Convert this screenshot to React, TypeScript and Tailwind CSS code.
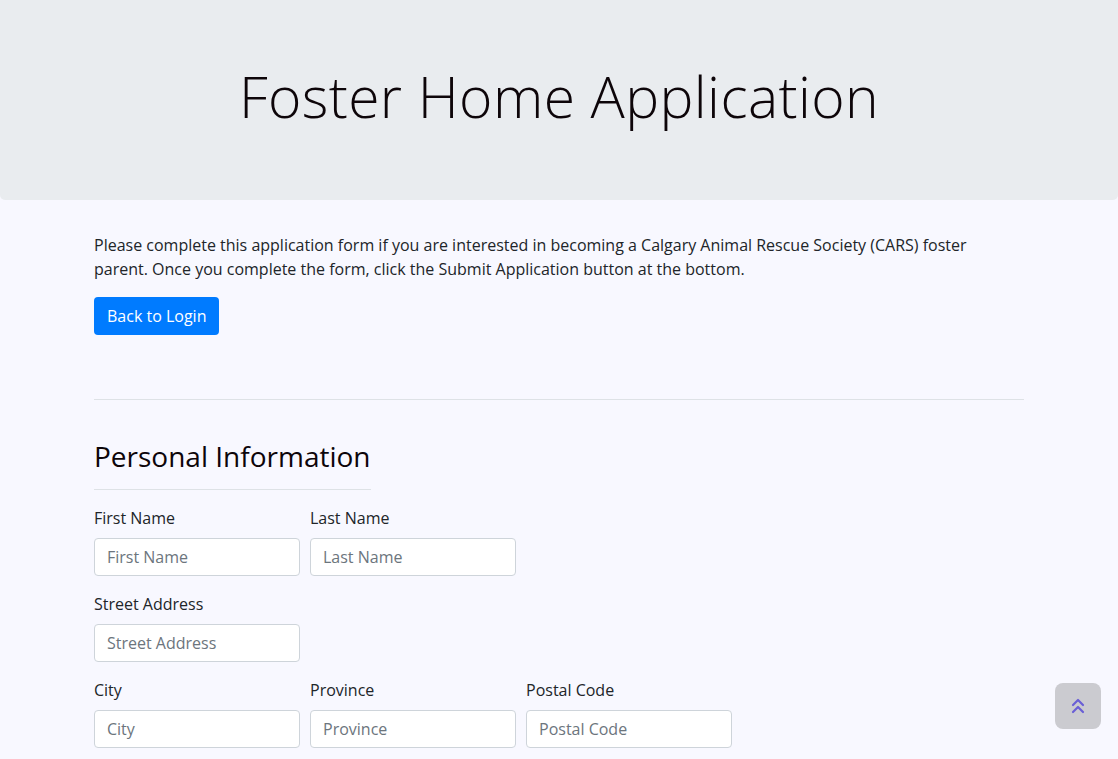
import { ChevronsUp } from 'lucide-react';

const rows: string[][] = [
  ['First Name', 'Last Name'],
  ['Street Address'],
  ['City', 'Province', 'Postal Code'],
];

function Field({ label }: { label: string }) {
  return (
    <div className="flex w-[206px] flex-col">
      <label className="mb-2 text-base leading-6 text-[#212529]">{label}</label>
      <input
        type="text"
        placeholder={label}
        className="h-[38px] w-full rounded border border-[#ced4da] bg-white px-3 text-base text-[#495057] placeholder:text-[#6c757d] focus:outline-none"
      />
    </div>
  );
}

export default function App() {
  return (
    <div className="min-h-[759px] bg-[#f8f8ff] font-['Open_Sans',sans-serif] text-[#212529]">
      <header className="flex h-[200px] items-center justify-center rounded-b-[5px] bg-[#e9ecef] pb-[7px]">
        <h1 className="text-[57px] font-light leading-[1.2] tracking-[0.4px] text-[#0d0509]">Foster Home Application</h1>
      </header>

      <main className="mx-auto w-[930px] pt-[33px]">
        <p className="mb-4 text-base leading-6">
          Please complete this application form if you are interested in becoming a Calgary Animal Rescue Society (CARS) foster
          parent. Once you complete the form, click the Submit Application button at the bottom.
        </p>
        <button className="h-[38px] rounded bg-[#007bff] px-[13px] text-base leading-6 text-white">Back to Login</button>

        <hr className="mt-16 border-t border-[#dee2e6]" />

        <section className="pt-10">
          <h2 className="inline-block border-b border-[#dee2e6] pb-[15px] text-[28px] leading-[1.2] text-[#0d0509]">
            Personal Information
          </h2>
          <div className="mt-4 flex flex-col gap-4">
            {rows.map((row) => (
              <div key={row[0]} className="flex gap-[10px]">
                {row.map((f) => (
                  <Field key={f} label={f} />
                ))}
              </div>
            ))}
          </div>
        </section>
      </main>

      <button className="fixed bottom-[30px] right-[17px] flex h-[46px] w-[46px] items-center justify-center rounded-lg bg-[#cbcbd0]">
        <ChevronsUp className="h-6 w-6 text-[#6a5fd6]" strokeWidth={2.2} />
      </button>
    </div>
  );
}
